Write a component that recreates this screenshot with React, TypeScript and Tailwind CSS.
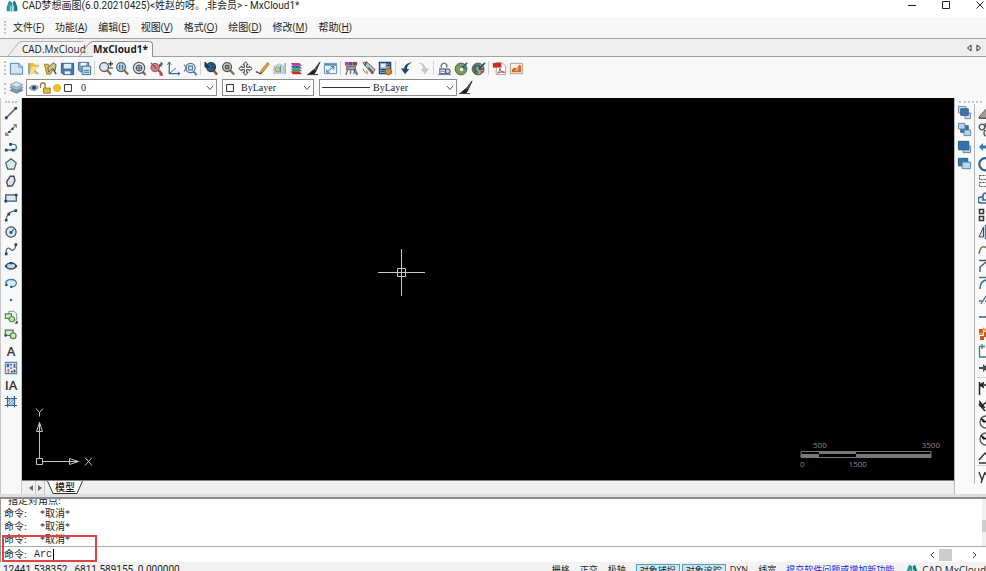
import type { ReactNode } from "react";
import clsx from "clsx";

const NAVY = "#1f4468";
const BLUE = "#3f7fae";
const SKY = "#bcd9ec";
const GREEN = "#4c8f3c";
const DARK = "#333333";

const magnifier = (color: string, fill: string) => (
  <>
    <path d="M9.5 9.5l4.5 5" stroke="#8a6a4a" strokeWidth="2.4" />
    <circle cx="6.5" cy="6.5" r="4.7" fill={fill} stroke={color} strokeWidth="1.4" />
  </>
);

const icons: Record<string, ReactNode> = {
  // file
  new: (
    <path d="M1.5 2.5h9l4 4v7.500h-13z M10.500 2.500v4h4" fill="#cfe4f4" stroke="#4f81a8" />
  ),
  open: (
    <>
      <path d="M3 2h5l1 2h5v2H6l-2 9H3z" fill="#e9b93f" />
      <path d="M6 6h7l-3 4 3 4H4z" fill="#f7dc8a" />
      <path d="M3 2v12M9 10l4 4" stroke="#6b93a8" strokeWidth="1.2" />
    </>
  ),
  openWeb: (
    <>
      <path d="M1.500 3.500h4l1 2h6L8 14H4z" fill="#e3c052" stroke="#9a7a22" />
      <path d="M5 7l6-5 3 2-1 6-3-2-4 4z" fill="#c9c48a" stroke="#5c6b3c" />
      <path d="M11 9l3 5" stroke="#3b5d7a" strokeWidth="1.6" />
    </>
  ),
  save: (
    <>
      <path d="M1.500 2.500h13v12h-11l-2-2z" fill="#4379a8" stroke="#2f5b84" />
      <path d="M4 3h8v5H4z" fill="#dcebf7" />
      <path d="M5 11h6v3H5z" fill="#f3f7fa" />
    </>
  ),
  saveAs: (
    <>
      <path d="M1.500 1.500h11v10h-9l-2-2z" fill="#7aa5cb" stroke="#386a96" />
      <path d="M4 2h6v3H4z" fill="#fff" />
      <path d="M5.500 5.500h9v9h-9z" fill="#cfe2f2" stroke="#386a96" />
      <path d="M7 10h6M7 12h6" stroke="#386a96" />
    </>
  ),
  // view
  zoomIn: (
    <>
      {magnifier("#56626c", "#dbe6ee")}
      <path d="M11 3h5M13.500 .5v5M11 7.500h5" stroke={DARK} strokeWidth="1.2" />
    </>
  ),
  zoomWindow: (
    <>
      {magnifier("#4d6478", "#c6d9e8")}
      <path d="M5 4v5M8 4v5" stroke="#44698a" strokeWidth="1.4" />
    </>
  ),
  zoomExtents: (
    <>
      <path d="M11 11l3.500 4" stroke="#8a6a4a" strokeWidth="2.4" />
      <circle cx="7.500" cy="7.500" r="6" fill="#e4eaee" stroke="#54626d" strokeWidth="1.3" />
      <path d="M3.500 7.500h8M7.500 3.500v8M5 5h5v5H5z" stroke="#3f4f5c" fill="none" />
    </>
  ),
  zoomRed: (
    <>
      <path d="M9 9l5 5M13 3l-4 5" stroke="#58504f" strokeWidth="2" />
      <circle cx="6.500" cy="7" r="4.500" fill="#dc7b80" stroke="#a04650" />
      <path d="M2 2l6 6M13 1v5M11 4l4-1" stroke="#55616e" strokeWidth="1.300" />
      <path d="M12 10v5h3" stroke="#c8414b" fill="none" strokeWidth="1.500" />
    </>
  ),
  ucs: (
    <>
      <path d="M3.500 1v12.500H15" stroke="#356a9b" strokeWidth="1.400" fill="none" />
      <path d="M3.500 13.500l7-6M1.500 4l2-3 2 3M12.500 11.500l2.500 2-2.500 2" stroke="#356a9b" fill="none" />
    </>
  ),
  zoomPrev: (
    <>
      <path d="M11 11l3.500 4" stroke="#5d7489" strokeWidth="2" />
      <circle cx="8" cy="7.500" r="5" fill="#e5eff7" stroke="#517798" strokeWidth="1.300" />
      <path d="M1 4l3 3.500L1 11M6 5.500h4v4H6z" stroke="#517798" fill="none" strokeWidth="1.200" />
    </>
  ),
  zoomRealtime: (
    <>
      <path d="M9 9l5 5.500" stroke="#8c5f3d" strokeWidth="2.600" />
      <circle cx="7.500" cy="6.500" r="4.700" fill="#34618b" stroke="#263f57" strokeWidth="1.400" />
      <path d="M1 1v5.500h5zM7 4h5M8 7h4" stroke="#213b55" fill="#213b55" />
    </>
  ),
  zoomObject: (
    <>
      {magnifier("#555", "#ddd")}
      <path d="M4.500 4.500h4v4h-4z" fill="#888" stroke="#444" />
    </>
  ),
  pan: (
    <path
      d="M8 .8l2.700 3.200H9.200v2.800H12V5.300L15.200 8 12 10.700V9.200H9.200V12h1.500L8 15.200 5.300 12h1.500V9.200H4v1.500L.8 8 4 5.300v1.500h2.800V4H5.300z"
      fill="#fff"
      stroke={DARK}
    />
  ),
  pencil: (
    <>
      <path d="M13.500 1.500l1.500 2-7 9-2.500.5 1-3z" fill="#e8a33c" stroke="#9b6a24" strokeWidth=".8" />
      <path d="M1 12c2-2 3 3 6 1" stroke={DARK} fill="none" strokeWidth="1.300" />
    </>
  ),
  measure: (
    <>
      <path d="M2 6l6-3 4 2v8H2z" fill="#c6dceb" stroke="#9db7c9" />
      <path d="M14 2v12" stroke="#7fae77" strokeWidth="1.400" />
      <circle cx="6" cy="9" r="2.600" fill="#eac462" stroke="#76a06b" />
      <path d="M9 5v7" stroke="#5d86a3" />
    </>
  ),
  layers: (
    <>
      <path d="M2 2h9l3 3H4z" fill="#d6357a" />
      <path d="M2 5h9l3 3H4z" fill="#3166b6" />
      <path d="M2 8h9l3 3H4z" fill="#36a357" />
      <path d="M2 11h9l3 3H4z" fill="#cc2f3c" />
    </>
  ),
  brush: (
    <>
      <path d="M15 1L8.500 9.500l2 1.500z" fill="#555" stroke={DARK} />
      <path d="M8.500 9l2.500 2-2 3H1c3 0 4-4 7.500-5z" fill="#1f1f1f" />
      <path d="M1 14.500h12" stroke={DARK} />
    </>
  ),
  resize: (
    <>
      <path d="M1.500 2.500h13v11h-13z" fill="#eaf3fa" stroke="#5a8db6" />
      <path d="M2 4h12" stroke="#5a8db6" strokeWidth="2" />
      <path d="M4 12l7-5.500M8 6h3.500v3.500M4 9v3h3" stroke="#39719f" fill="none" />
    </>
  ),
  // tools
  filter: (
    <>
      <path d="M1 1h4v4H1z" fill="#cf3d8e" />
      <path d="M5 1h4v4H5z" fill="#4056a8" />
      <path d="M9 1h5v4H9z" fill="#8a4f3a" />
      <path d="M3 6h9v3H3zM4 9l-2 6M7 9v5M10 9l4 6" stroke="#747474" strokeWidth="1.500" fill="#b8a7a0" />
      <path d="M10 14l2-5 2.500 5" stroke="#2c5f9a" fill="none" />
    </>
  ),
  erase: (
    <>
      <path d="M2 2l4-1 9 8-3 5z" fill="#b8c0c8" stroke="#59636c" />
      <path d="M6 1l-2 4M8 7l5 6" stroke="#6e4e3e" strokeWidth="1.500" />
      <path d="M2 8l3 5M6 10l1 4" stroke="#a26a4a" />
    </>
  ),
  properties: (
    <>
      <path d="M1.500 1.500h12v12h-12z" fill="#7fa5c9" stroke="#27435f" strokeWidth="1.300" />
      <path d="M3 3h5v4H3z" fill="#eaf2fa" />
      <path d="M9 3h4M9 5h4M3 9h5M3 11h4" stroke="#20354a" />
      <path d="M8 9l5-1 2 4-4 3-3-2z" fill="#d58a3c" stroke="#8d5520" />
    </>
  ),
  undo: <path d="M14 1.500C9 1.500 6 4 5.500 8H2l4.500 6L11 8.500H8.500C8.500 5.500 10 3 14 1.500z" fill="#25476f" />,
  redo: <path d="M2 1.500C7 1.500 10 4 10.500 8H14l-4.500 6L5 8.500h2.500C7.500 5.500 6 3 2 1.500z" fill="#c3c7ca" />,
  find: (
    <>
      <path d="M5 7a3 3 0 1 1 5 0M3 8.500h6v5H3z" stroke="#66758f" fill="none" strokeWidth="1.400" />
      <circle cx="11.500" cy="11" r="2.500" fill="#d4dbe8" stroke="#4e5e80" strokeWidth="1.200" />
      <path d="M1 14.500h14M4 11h4" stroke="#66758f" />
    </>
  ),
  globe: (
    <>
      <circle cx="7.500" cy="8.500" r="6.300" fill="#7ca154" stroke="#4c5b4a" />
      <path d="M3 5c3-2 5 1 3 3s0 4 3 3 4-4 4-5z" fill="#3a7aa5" />
      <circle cx="8" cy="9" r="2" fill="#eef3d9" />
      <path d="M9 7l5-5" stroke="#2c5d87" strokeWidth="1.800" />
    </>
  ),
  globeSync: (
    <>
      <circle cx="7.500" cy="8.500" r="6.300" fill="#a2a79c" stroke="#454f4a" />
      <path d="M3 5c2-2 5-2 6-1L5 8l3 4-2 2C3 13 1 9 3 5z" fill="#3f6d58" />
      <path d="M15 2L9 8M9 4v4.500h4.500" stroke="#3b4b4e" strokeWidth="1.800" fill="none" />
      <path d="M10 12l4-1" stroke="#c35145" strokeWidth="2" />
    </>
  ),
  pdf: (
    <>
      <path d="M4.500 1.500h6l4 4v9h-10z" fill="#fff" stroke="#a3a3a3" />
      <path d="M1 2h9v5H1z" fill="#cf2b2b" />
      <path d="M6 13c2-2 3-4 2.500-5 0 3 2 4 5 4-3-1-5 0-7.500 1z" stroke="#cf2b2b" fill="none" />
    </>
  ),
  image: (
    <>
      <path d="M1.500 2.500h13v11h-13z" fill="#f6eee6" stroke="#aa9d92" />
      <path d="M3 12V9l3-2 2 1 3-4 2 1v7z" fill="#d06c33" />
      <path d="M6 10l5-4-2 5z" fill="#f3b75a" />
    </>
  ),
  layerStack: (
    <>
      <path d="M1 11l7-3 7 3-7 3z" fill="#7e97ab" stroke="#6d879d" />
      <path d="M1 8l7-3 7 3-7 3z" fill="#a8c0d2" stroke="#6d879d" />
      <path d="M1 5l7-3 7 3-7 3z" fill="#d3e2ed" stroke="#8aa1b4" />
    </>
  ),
  // draw
  line: (
    <>
      <path d="M2.500 13.500l11-11" stroke="#3d5f7d" strokeWidth="1.800" />
      <path d="M1 12h3v3H1zM12 1h3v3h-3z" fill={NAVY} />
    </>
  ),
  xline: (
    <>
      <path d="M2 14L14 2M2 10.500V14h3.500M10.500 2H14v3.500" stroke="#666" fill="none" strokeWidth="1.200" />
      <path d="M5 9h2.500v2.500H5zM8.500 5.500H11V8H8.500z" fill={NAVY} />
    </>
  ),
  pline: (
    <>
      <path d="M2 11.500h9a3 3 0 0 0 0-6.500H7" stroke={BLUE} fill="none" strokeWidth="1.600" />
      <path d="M1 10h3v3H1zM9 10h3v3H9zM6 3.500h3v3H6z" fill={NAVY} />
    </>
  ),
  polygon: <path d="M8 2l6 4.700-2.300 7.100H4.300L2 6.700z" fill="#d9ebee" stroke="#3a5762" strokeWidth="1.300" />,
  polygonIrregular: (
    <path d="M7 2.500h4.500L12.500 8l-3 5.500-5 .5-1.500-5z" fill="#e0e3e4" stroke="#454f55" strokeWidth="1.600" />
  ),
  rect: (
    <>
      <path d="M2 4.500h12v7H2z" fill="#dbe9f2" stroke="#44515c" strokeWidth="1.400" />
      <path d="M12.500 3h3v3h-3zM.5 10h3v3h-3z" fill={NAVY} />
    </>
  ),
  arc: (
    <>
      <path d="M2.500 14C3 7.500 6.500 3.500 13.500 3" stroke="#476073" fill="none" strokeWidth="1.500" />
      <path d="M1 12.500h3v3H1zM12 1.500h3v3h-3zM4 5.500h3v3H4z" fill={NAVY} />
    </>
  ),
  circle: (
    <>
      <circle cx="8" cy="8" r="5.800" fill="#d5e9f5" stroke="#3a4f60" strokeWidth="1.400" />
      <path d="M8 8l4-4" stroke={BLUE} strokeWidth="1.300" />
      <path d="M6.500 7h3v3h-3z" fill={NAVY} />
    </>
  ),
  spline: (
    <>
      <path d="M2.500 13C2 6 6 6 7.500 8.500S13.500 9 13.500 3" stroke="#476073" fill="none" strokeWidth="1.400" />
      <path d="M1 12h3v3H1zM12 1.500h3v3h-3z" fill={NAVY} />
    </>
  ),
  ellipse: (
    <>
      <ellipse cx="8" cy="8" rx="5.500" ry="3.300" fill={SKY} stroke="#3b5262" strokeWidth="1.700" />
      <path d="M6.800 3.500h2.500v2.500H6.800zM1 7h2.500v2.500H1zM12.500 7H15v2.500h-2.500z" fill={NAVY} />
    </>
  ),
  ellipseArc: (
    <>
      <path d="M3 10C1 6 4 4 8 4s7 2 6 5-3 3.500-6 3.500" fill="#dcecf7" stroke={BLUE} strokeWidth="1.600" />
      <path d="M1.500 9H4v2.500H1.500zM7 11h2.500v2.500H7z" fill={NAVY} />
    </>
  ),
  point: <circle cx="8" cy="8" r="1.400" fill="#2f648b" />,
  insertBlock: (
    <>
      <path d="M5.500 1.500h6l3 3v7h-9z" fill="#edf2f5" stroke="#6d8a9e" />
      <path d="M1.500 4.500h7v5h-7z" fill="#d4e8c8" stroke={GREEN} strokeWidth="1.300" />
      <circle cx="9" cy="10.500" r="3" fill="#c1dcb5" stroke={GREEN} strokeWidth="1.200" />
      <path d="M15.500 12v3.500H12z" fill="#111" />
    </>
  ),
  makeBlock: (
    <>
      <path d="M1.500 3.500h9v6h-9z" fill="#d9ead3" stroke="#49764a" strokeWidth="1.300" />
      <circle cx="10.500" cy="10" r="3.300" fill="#cfe5c4" stroke={GREEN} strokeWidth="1.400" />
      <path d="M.5 8.500H3V11H.5z" fill={NAVY} />
    </>
  ),
  hatch: (
    <>
      <path d="M1.500 1.500h13v13h-13z" fill="#e4edf5" stroke="#5f83a6" strokeWidth="1.300" />
      <path d="M3 3h3v4H3zM7 3h2v2H7zM11 3h2v5h-2z" fill="#3b6a9b" />
      <path d="M7 7h2v2H7zM4 9h2v2H4z" fill="#cb4f40" />
      <path d="M8 11h2v2H8zM11 10h2v3h-2zM4 12h2v1H4z" fill="#2b4058" />
    </>
  ),
  region: (
    <>
      <path d="M4 1v13M12 1v13M1 4h14M1 12h14" stroke="#315e86" strokeWidth="1.400" />
      <path d="M4 4h8v8H4z" fill="#b9d6ea" stroke="#315e86" />
      <path d="M4 12l8-8M4 8l4-4M8 12l4-4" stroke="#5484aa" />
    </>
  ),
  // order
  front: (
    <>
      <path d="M1.500 1.500h8v7h-8zM8.500 8.500h6v6h-6z" fill="#c8dbea" stroke="#6489a9" />
      <path d="M4 4h8v7H4z" fill="#3a76ad" stroke="#285d8f" />
    </>
  ),
  back: (
    <>
      <path d="M4 4h8v7H4z" fill="#3a76ad" stroke="#285d8f" />
      <path d="M1.500 1.500h7v6h-7zM7.500 8.500h7v6h-7z" fill="#b8d2e8" stroke="#5d84a6" />
    </>
  ),
  above: (
    <>
      <path d="M6.500 7.500h8v7h-8z" fill="#b8cfe2" stroke="#5680a5" />
      <path d="M1.500 2.500h11v9h-11z" fill="#3471ab" stroke="#285888" />
    </>
  ),
  below: (
    <>
      <path d="M1.500 2.500h10v8h-10z" fill="#3a76ad" stroke="#285888" />
      <path d="M5.500 6.500h9v7h-9z" fill="#bcd6eb" stroke="#5680a5" />
    </>
  ),
  // modify
  eraser: <path d="M1 12L9 3v10H1zM1 13.500h12" fill="#a59b90" stroke="#5c5650" />,
  copy: (
    <g fill="none" stroke="#4b5358" strokeWidth="1.300">
      <circle cx="4" cy="5" r="2.800" />
      <circle cx="9" cy="3" r="2" />
      <circle cx="9" cy="11" r="3" />
    </g>
  ),
  move: <path d="M1 8l4-4v2.500h3V1h3v14H8V9.500H5V12z" fill="#3b77ad" />,
  rotate: <path d="M9 2.500A6 6 0 1 0 9 14" stroke="#2e5f95" strokeWidth="2.200" fill="none" />,
  stretch: (
    <path d="M1.500 2.500h13v4h-13zM1.500 9.500h13v4h-13z" stroke="#555" strokeDasharray="2 1" fill="none" />
  ),
  cloud: (
    <path d="M3 13a3 3 0 0 1 0-6c1 0 2 1 2 1s-1-5 3-5M3 13h9M4 10h8" stroke="#3a6890" strokeWidth="1.600" fill="#d9e9f5" />
  ),
  array: (
    <path d="M1.500 2.500h4v4h-4zM9 2.500h4v4H9zM1.500 9.500h4v4h-4zM9 9.500h4v4H9z" stroke="#333" strokeWidth="1.500" fill="#fff" />
  ),
  mirror: (
    <>
      <path d="M1 13L5.500 3v10z" fill="#e8e8e8" stroke="#444" />
      <path d="M7.500 1v14" stroke={BLUE} strokeWidth="1.500" />
      <path d="M9 3l5 10H9z" fill={BLUE} />
    </>
  ),
  offset: <path d="M1 13c1-5 2-8 6-7s3 3 8 1" stroke="#807846" strokeWidth="1.600" fill="none" />,
  chamfer: <path d="M1 2.500h14M2 14V9l6-5" stroke="#3d5c70" strokeWidth="1.400" fill="none" />,
  fillet: <path d="M1 2.500h14M2 14c0-7 3-9 8-9" stroke="#3c7898" strokeWidth="1.600" fill="none" />,
  trim: <path d="M1 9h3M7 9h6M3 12l5-8" stroke="#3f6f9b" strokeWidth="1.400" />,
  extend: <path d="M1 8h12" stroke="#315e7d" strokeWidth="1.500" />,
  explode: (
    <>
      <path d="M1 3h4v4H1zM6 6h4v5H6zM2 10h4v4H2z" fill="#d45427" />
      <path d="M5 2l3 3M1 8h4M8 13h4" stroke="#eea333" strokeWidth="2" />
    </>
  ),
  join: <path d="M1.500 4v10h12M1 3.500h6M4 1v5" stroke="#397b86" strokeWidth="1.300" fill="none" />,
  arrow: <path d="M1 7h4V4l5 4-5 4V9H1z" fill="#37505f" />,
  dimLinear: <path d="M1.500 2v13M1.500 5h14M6 2.500L2 5l4 2.500" stroke="#222" strokeWidth="1.500" fill="none" />,
  dimAligned: <path d="M1 7l6 7M3 9l9-6M2 5l4 5-4-1z" stroke="#222" strokeWidth="1.500" fill="none" />,
  dimRadius: (
    <>
      <circle cx="8" cy="8" r="6" fill="none" stroke="#555" strokeWidth="1.300" />
      <path d="M3 4l5 4-3 0z" fill="#111" stroke="#111" />
    </>
  ),
  leader: <path d="M1 12l6-7 4 5M1 15h10" stroke="#333" strokeWidth="1.400" fill="none" />,
  dimEdit: <path d="M3 15l4-11M1 4l3 8M6 6h7" stroke="#333" strokeWidth="1.400" fill="none" />,
  eye: (
    <>
      <path d="M.5 8c3-5 10-6 14-2l-1 3c-4 4-9 4-13-1z" fill="#9db3c4" stroke="#465b6d" />
      <circle cx="8" cy="7.500" r="3" fill="#23405a" />
    </>
  ),
  unlock: (
    <>
      <path d="M2 8V4a3 3 0 0 1 6 0v4" stroke="#9b7d26" strokeWidth="1.800" fill="none" />
      <path d="M6 8h9v7H6z" fill="#e3b63c" stroke="#8c6c1c" />
    </>
  ),
  sun: <circle cx="8" cy="8" r="5.500" fill="#f9c31f" stroke="#e6a01c" strokeWidth="1.500" />,
  swatch: <path d="M2.500 2.500h11v11h-11z" fill="#fff" stroke="#222" strokeWidth="1.500" />,
  logo: (
    <>
      <path d="M4 1l4 2v12H1V9z" fill="#1b9a98" />
      <path d="M12 1L9 3v12h6V9z" fill="#127a80" />
      <path d="M5 6l3 4 3-4v9H9v-4l-1 1-1-1v4H5z" fill="#8ad4cf" />
    </>
  ),
};

function Icon({ name, className = "size-4" }: { name: string; className?: string }) {
  return (
    <svg viewBox="0 0 16 16" fill="none" className={clsx("shrink-0", className)} aria-hidden="true">
      {icons[name]}
    </svg>
  );
}

interface ToolButtonProps {
  name: string;
  iconClassName?: string;
  children?: ReactNode;
}

function ToolButton({ name, iconClassName = "size-[15px]", children }: ToolButtonProps) {
  return (
    <button
      type="button"
      aria-label={name}
      className="flex size-[17px] shrink-0 items-center justify-center hover:bg-sky-100"
    >
      {children ?? <Icon name={name} className={iconClassName} />}
    </button>
  );
}

const menus = [
  ["文件", "F"],
  ["功能", "A"],
  ["编辑", "E"],
  ["视图", "V"],
  ["格式", "O"],
  ["绘图", "D"],
  ["修改", "M"],
  ["帮助", "H"],
];

const toolGroups = [
  ["new", "open", "openWeb", "save", "saveAs"],
  ["zoomIn", "zoomWindow", "zoomExtents", "zoomRed", "ucs", "zoomPrev"],
  ["zoomRealtime", "zoomObject", "pan", "pencil", "measure", "layers", "brush", "resize"],
  ["filter", "erase", "properties"],
  ["undo", "redo"],
  ["find", "globe", "globeSync"],
  ["pdf", "image"],
];

const drawTools = [
  "line", "xline", "pline", "polygon", "polygonIrregular", "rect", "arc", "circle", "spline",
  "ellipse", "ellipseArc", "point", "insertBlock", "makeBlock", "text", "hatch", "mtext", "region",
];

const letterTools: Record<string, string> = { text: "A", mtext: "IA" };

const orderTools = ["front", "back", "above", "below"];

const modifyTools = [
  "eraser", "copy", "move", "rotate", "stretch", "cloud", "array", "mirror", "offset",
  "chamfer", "fillet", "trim", "extend", "explode", "join", "arrow",
];

const dimTools = ["dimLinear", "dimAligned", "dimRadius", "dimRadius", "leader"];

function TitleBar() {
  return (
    <header className="flex h-[17px] shrink-0 items-start bg-white pl-[6px] font-['Roboto','Noto_Sans_CJK_SC',sans-serif] leading-3">
      <Icon name="logo" className="size-3" />
      <h1 className="ml-1 flex-1 whitespace-nowrap">
        CAD梦想画图(6.0.20210425)&lt;姓赵的呀。,非会员&gt; - MxCloud1*
      </h1>
      <div className="flex gap-6 pr-px">
        <button type="button" aria-label="最小化">
          <svg viewBox="0 0 10 10" className="size-[10px]" fill="none" stroke="#222">
            <path d="M1 5.500h8" />
          </svg>
        </button>
        <button type="button" aria-label="最大化">
          <svg viewBox="0 0 10 10" className="size-[10px]" fill="none" stroke="#222">
            <path d="M1.500 1.500h7v7h-7z" />
          </svg>
        </button>
        <button type="button" aria-label="关闭">
          <svg viewBox="0 0 10 10" className="size-[10px]" fill="none" stroke="#222">
            <path d="M1.500 1.500l7 7M8.500 1.500l-7 7" />
          </svg>
        </button>
      </div>
    </header>
  );
}

function Grip({ vertical = false }: { vertical?: boolean }) {
  return (
    <div
      className={clsx(
        "shrink-0 border-dotted border-[#c4c4c4]",
        vertical ? "my-1 w-1 border-l-2" : "mx-1 h-[3px] border-t-2"
      )}
    />
  );
}

function MenuBar() {
  return (
    <nav className="flex h-[21px] shrink-0 items-center bg-[#f7f7f7] pl-1">
      <div className="flex self-stretch">
        <Grip vertical />
      </div>
      <div className="ml-[5px] flex gap-[11px]">
        {menus.map(([label, key]) => (
          <button key={key} type="button" className="whitespace-nowrap">
            {label}(<span className="underline">{key}</span>)
          </button>
        ))}
      </div>
    </nav>
  );
}

function DocumentTabs() {
  return (
    <div className="flex h-[19px] shrink-0 items-end border-y border-[#a3a3a3] bg-[#eeeeee] pl-2">
      <button type="button" className="flex h-[15px]">
        <svg viewBox="0 0 14 15" className="h-[15px] w-[14px]" fill="#f4f4f4" stroke="#b0b0b0">
          <path d="M0 15L10 2.500Q12 .5 14 .5" />
        </svg>
        <span className="w-[61px] border-t border-[#b0b0b0] bg-[#f4f4f4] text-left leading-[14px]">
          CAD.MxCloud
        </span>
      </button>
      <button type="button" className="z-10 -ml-1 -mb-px flex h-4">
        <svg viewBox="0 0 14 16" className="h-4 w-[14px]" fill="#fafafa" stroke="#909090">
          <path d="M0 16L10 2.500Q12 .5 14 .5" />
        </svg>
        <span className="rounded-tr-sm border-t border-r border-[#909090] bg-[#fafafa] pr-1 leading-[15px] font-bold">
          MxCloud1*
        </span>
      </button>
      <div className="ml-auto flex gap-1 self-center pr-1">
        <button type="button" aria-label="上一个">
          <svg viewBox="0 0 6 8" className="h-2 w-[6px]" fill="#fff" stroke="#222">
            <path d="M5 1v6L1.500 4z" />
          </svg>
        </button>
        <button type="button" aria-label="下一个">
          <svg viewBox="0 0 6 8" className="h-2 w-[6px]" fill="#fff" stroke="#222">
            <path d="M1 1v6l3.500-3z" />
          </svg>
        </button>
      </div>
    </div>
  );
}

interface ComboProps {
  label: string;
  value: string;
  className: string;
  selectClassName: string;
  children: ReactNode;
}

function Combo({ label, value, className, selectClassName, children }: ComboProps) {
  return (
    <div className={clsx("relative h-[17px]", className)}>
      <select
        aria-label={label}
        defaultValue={value}
        className={clsx(
          "h-full w-full appearance-none border border-[#8c8c8c] bg-white font-['Liberation_Serif','Noto_Sans_CJK_SC',serif] text-[10px] leading-[14px]",
          selectClassName
        )}
      >
        <option>{value}</option>
      </select>
      <div className="pointer-events-none absolute inset-y-0 left-[3px] flex items-center">{children}</div>
      <svg
        viewBox="0 0 8 6"
        className="pointer-events-none absolute top-[6px] right-[3px] h-[6px] w-2"
        fill="none"
        stroke="#555"
      >
        <path d="M1 1l3 3.500L7 1" />
      </svg>
    </div>
  );
}

function Toolbars() {
  return (
    <div className="shrink-0 bg-[#f8f8f8]">
      <div className="flex h-[22px] items-center pl-1">
        <div className="flex self-stretch">
          <Grip vertical />
        </div>
        {toolGroups.map((group, i) => (
          <div key={i} className="flex items-center">
            {i > 0 && <div className="mr-[2px] ml-px h-[14px] w-px bg-[#d0d0d0]" />}
            {group.map((name) => (
              <ToolButton key={name} name={name} />
            ))}
          </div>
        ))}
      </div>
      <div className="flex h-[19px] items-start pl-1">
        <div className="flex self-stretch">
          <Grip vertical />
        </div>
        <ToolButton name="layerStack" />
        <Combo label="图层" value="0" className="ml-px w-[191px]" selectClassName="pl-[54px]">
          <Icon name="eye" className="size-[10px]" />
          <Icon name="unlock" className="size-3" />
          <Icon name="sun" className="ml-px size-[10px]" />
          <Icon name="swatch" className="ml-px size-[10px]" />
        </Combo>
        <Combo label="颜色" value="ByLayer" className="ml-[5px] w-[92px]" selectClassName="pl-[18px]">
          <Icon name="swatch" className="size-[10px]" />
        </Combo>
        <Combo label="线型" value="ByLayer" className="ml-[5px] w-[138px]" selectClassName="pl-[53px]">
          <div className="h-px w-12 bg-[#333]" />
        </Combo>
        <ToolButton name="brush" />
      </div>
    </div>
  );
}

function Canvas() {
  return (
    <div className="relative min-h-0 flex-1 border-b border-[#808080] bg-black">
      {/* crosshair */}
      <svg viewBox="0 0 47 47" className="absolute top-[151px] left-[356px] size-[47px]" fill="none" stroke="#c9c9c9">
        <path d="M23.500 0v47M0 23.500h47M19.500 19.500h8v8h-8z" />
      </svg>

      {/* ucs axes */}
      <svg
        viewBox="0 0 60 64"
        className="absolute bottom-2 left-3 h-16 w-[60px]"
        fill="none"
        stroke="#c4c4c4"
      >
        <path d="M2.500 50.500h6v6h-6zM5.500 50.500v-36M8.500 53.500h36M2.500 23.500l3-9 3 9zM35.500 50.500l9 3-9 3z" />
        <path d="M2 0.500l3.500 4 3.500-4M5.500 4.500v4M51 49.500l7 8M58 49.500l-7 8" />
      </svg>

      {/* scale */}
      <div className="absolute right-3 bottom-3 w-[142px] text-[8px] leading-[9px] text-[#8a8a8a]">
        <div className="flex justify-between pr-[2px] pl-[13px]">
          <span>500</span>
          <span>3500</span>
        </div>
        <svg viewBox="0 0 132 8" className="my-px h-2 w-[132px]" fill="none">
          <path d="M1 1.500h130v6H1z" stroke="#777" />
          <path d="M19 1h37v3H19zM1 4h18v3H1zM56 4h75v3H56z" fill="#777" />
        </svg>
        <div className="flex gap-11">
          <span>0</span>
          <span>1500</span>
        </div>
      </div>
    </div>
  );
}

function LayoutTabs() {
  return (
    <div className="flex h-[13px] shrink-0 items-stretch bg-[#f0f0f0] pl-1">
      <button type="button" aria-label="上一布局" className="flex w-[9px] items-center justify-center">
        <svg viewBox="0 0 4 6" className="h-[6px] w-1" fill="#666">
          <path d="M4 0v6L0 3z" />
        </svg>
      </button>
      <button
        type="button"
        aria-label="下一布局"
        className="flex w-[10px] items-center justify-center border-x border-[#c4c4c4]"
      >
        <svg viewBox="0 0 4 6" className="h-[6px] w-1" fill="#666">
          <path d="M0 0v6l4-3z" />
        </svg>
      </button>
      <button type="button" className="ml-[2px] flex items-center leading-3">
        <svg viewBox="0 0 7 13" className="h-[13px] w-[7px]" fill="#fff" stroke="#333">
          <path d="M0 0l6 12.500h1V0" stroke="none" />
          <path d="M.5 0l5.500 12.500h1" />
        </svg>
        <span className="border-b border-[#333] bg-white px-px font-medium">模型</span>
        <svg viewBox="0 0 7 13" className="h-[13px] w-[7px]" fill="#fff" stroke="#333">
          <path d="M0 0h7L1 12.500H0z" stroke="none" />
          <path d="M6.500 0L1 12.500H0" />
        </svg>
      </button>
    </div>
  );
}

function CommandPanel() {
  return (
    <section className="relative shrink-0 border-l border-[#999] bg-white font-['Liberation_Serif','Noto_Sans_CJK_SC',serif] leading-[13px]">
      <div className="flex h-[47px]">
        <div className="flex min-w-0 flex-1 flex-col justify-end overflow-hidden pl-[3px]">
          <p className="pl-1">指定对角点:</p>
          {[1, 2, 3].map((n) => (
            <p key={n} className="flex">
              <span className="w-9">命令:</span>
              <span>*取消*</span>
            </p>
          ))}
        </div>
        <div className="flex w-1 flex-col items-center bg-[#f0f0f0] pt-[21px]">
          <div className="h-3 w-full bg-[#cdcdcd]" />
        </div>
      </div>
      <div className="flex h-4 items-center border-t border-[#a8a8a8]">
        <label htmlFor="command" className="w-8 pl-[3px]">
          命令:
        </label>
        <input
          id="command"
          defaultValue="Arc"
          className="ml-px w-5 border-r border-black p-0 font-['Liberation_Mono',monospace] leading-3 outline-none"
        />
        <div className="ml-auto flex w-[57px] items-center justify-between pr-2">
          <svg viewBox="0 0 6 8" className="h-2 w-[6px]" fill="none" stroke="#444">
            <path d="M5 1L2 4l3 3" />
          </svg>
          <div className="mr-auto ml-1 h-3 w-[13px] bg-[#cdcdcd]" />
          <svg viewBox="0 0 6 8" className="h-2 w-[6px]" fill="none" stroke="#444">
            <path d="M1 1l3 3-3 3" />
          </svg>
        </div>
      </div>
      <div className="pointer-events-none absolute bottom-0 left-px h-[27px] w-[95px] border-2 border-[#e04343]" />
    </section>
  );
}

function StatusBar() {
  return (
    <footer className="flex h-[9px] shrink-0 items-start overflow-hidden bg-[#f2f2f2] pl-[3px] leading-4 whitespace-nowrap">
      <span className="font-['Roboto',sans-serif] whitespace-pre">12441.538352,  6811.589155, 0.000000</span>
      <div className="ml-auto flex items-start gap-[10px] text-[9px]">
        <button type="button">栅格</button>
        <button type="button">正交</button>
        <button type="button">极轴</button>
        <div className="flex gap-[2px]">
          <button type="button" className="mt-[2px] border border-[#4a9fc4] bg-[#cce8f6] px-[3px] leading-3">
            对象捕捉
          </button>
          <button type="button" className="mt-[2px] border border-[#4a9fc4] bg-[#cce8f6] px-[3px] leading-3">
            对象追踪
          </button>
          <button type="button" className="ml-[2px]">
            DYN
          </button>
        </div>
        <button type="button">线宽</button>
        <a href="#feedback" className="text-[#2222dd] underline">
          提交软件问题或增加新功能
        </a>
      </div>
      <div className="ml-3 flex items-start gap-1">
        <Icon name="logo" className="mt-[2px] size-3" />
        <span>CAD.MxCloud</span>
      </div>
    </footer>
  );
}

export default function App() {
  return (
    <div className="flex h-screen flex-col overflow-hidden bg-[#f8f8f8] font-['Open_Sans','Noto_Sans_CJK_SC',sans-serif] text-[10px] text-[#1c1c1c]">
      <TitleBar />
      <MenuBar />
      <DocumentTabs />
      <Toolbars />
      <main className="flex min-h-0 flex-1">
        <aside className="w-[22px] shrink-0 overflow-hidden border-x border-[#c8c8c8] bg-[#f8f8f8] pt-[3px]">
          <Grip />
          <div className="flex flex-col items-center">
            {drawTools.map((name) => (
              <ToolButton key={name} name={name} iconClassName="size-[14px]">
                {letterTools[name] && (
                  <span className="text-[13px] leading-4 font-semibold text-[#333]">{letterTools[name]}</span>
                )}
              </ToolButton>
            ))}
          </div>
        </aside>
        <div className="flex min-w-0 flex-1 flex-col">
          <Canvas />
          <LayoutTabs />
        </div>
        <aside className="w-8 shrink-0 overflow-hidden border-l border-[#b8b8b8] bg-[#fafafa] pt-[3px]">
          <Grip />
          <div className="flex">
            <div className="flex w-[19px] shrink-0 flex-col items-center">
              {orderTools.map((name) => (
                <ToolButton key={name} name={name} />
              ))}
            </div>
            <div className="flex shrink-0 flex-col border-l border-[#b5b5b5] pl-[2px]">
              {modifyTools.map((name) => (
                <ToolButton key={name} name={name} iconClassName="size-4" />
              ))}
              <div className="my-px h-px bg-[#d0d0d0]" />
              {dimTools.map((name, i) => (
                <ToolButton key={i} name={name} iconClassName="size-4" />
              ))}
              <div className="my-px h-px bg-[#d0d0d0]" />
              <ToolButton name="dimEdit" iconClassName="size-4" />
            </div>
          </div>
        </aside>
      </main>
      <div className="h-[5px] shrink-0 border-b-2 border-[#8c8c8c] bg-[#dedede]" />
      <CommandPanel />
      <StatusBar />
    </div>
  );
}
